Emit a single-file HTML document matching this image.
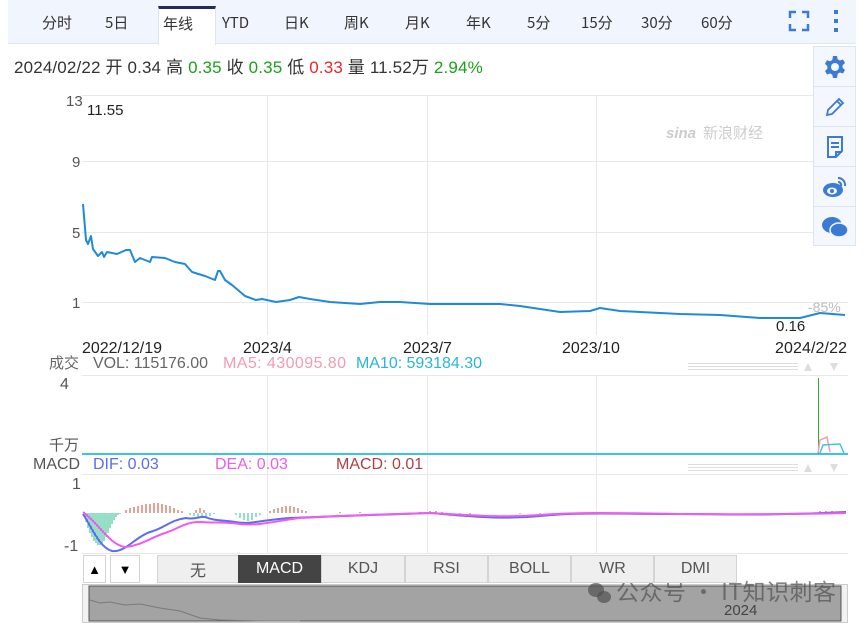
<!DOCTYPE html>
<html><head><meta charset="utf-8">
<style>
*{margin:0;padding:0;box-sizing:border-box}
body{width:865px;height:625px;background:#fff;position:relative;overflow:hidden;font-family:"Liberation Sans","Noto Sans CJK SC",sans-serif;color:#333}
.abs{position:absolute}
.tabbar{left:8px;top:0;width:848px;height:44px;background:#f1f5fd;border-bottom:1px solid #dde5f3}
.tab{position:absolute;top:12px;font-size:15px;color:#333;font-family:"Noto Sans CJK SC","Liberation Sans",sans-serif}
.active{position:absolute;left:150px;top:6px;width:58px;height:39px;background:#fff;border:1px solid #dde5f3;border-bottom:none;border-top:3px solid #1f2f5a}
.side{left:813px;top:46px;width:43px;height:200px;background:#f4f7fd;border:1px solid #dde5f3}
.side div{height:40px;border-bottom:1px solid #dde5f3;display:flex;align-items:center;justify-content:center}
.btn{position:absolute;top:555px;height:28px;background:#efefef;border:1px solid #d4d4d4;font-size:16px;color:#555;display:flex;align-items:center;justify-content:center;font-family:"Liberation Sans","Noto Sans CJK SC",sans-serif}
</style></head><body>
<div class="abs tabbar">
 <div class="active"></div>
 <span class="tab" style="left:34px">分时</span>
 <span class="tab" style="left:97px">5日</span>
 <span class="tab" style="left:155px;top:13px">年线</span>
 <span class="tab" style="left:214px">YTD</span>
 <span class="tab" style="left:276px">日K</span>
 <span class="tab" style="left:336px">周K</span>
 <span class="tab" style="left:397px">月K</span>
 <span class="tab" style="left:458px">年K</span>
 <span class="tab" style="left:519px">5分</span>
 <span class="tab" style="left:573px">15分</span>
 <span class="tab" style="left:633px">30分</span>
 <span class="tab" style="left:693px">60分</span>
 <svg class="abs" style="left:780px;top:10px" width="22" height="22" viewBox="0 0 22 22" fill="none" stroke="#3b7bd4" stroke-width="2.5"><path d="M2 8V2H8M14 2H20V8M20 14V20H14M8 20H2V14"/></svg>
 <svg class="abs" style="left:825px;top:10px" width="6" height="22"><rect x="1" y="0" width="4" height="4" fill="#3b7bd4"/><rect x="1" y="9" width="4" height="4" fill="#3b7bd4"/><rect x="1" y="18" width="4" height="4" fill="#3b7bd4"/></svg>
</div>
<div class="abs" style="left:14px;top:53px;font-size:17px;letter-spacing:0.15px;font-family:'Liberation Sans','Noto Sans CJK SC',sans-serif;white-space:nowrap">2024/02/22 开 0.34 高 <span style="color:#1aa11a">0.35</span> 收 <span style="color:#1aa11a">0.35</span> 低 <span style="color:#e8262b">0.33</span> 量 11.52万 <span style="color:#1aa11a">2.94%</span></div>

<svg class="abs" style="left:0;top:0" width="865" height="625">
 <g stroke="#e8e8e8" stroke-width="1">
  <line x1="82" y1="95.5" x2="848" y2="95.5"/><line x1="82" y1="161.5" x2="848" y2="161.5"/><line x1="82" y1="232.5" x2="848" y2="232.5"/><line x1="82" y1="302.5" x2="848" y2="302.5"/>
  <line x1="82" y1="375.5" x2="848" y2="375.5"/><line x1="82" y1="474.5" x2="848" y2="474.5"/><line x1="82" y1="553.5" x2="848" y2="553.5"/>
  <line x1="267.5" y1="95" x2="267.5" y2="335"/><line x1="427.5" y1="95" x2="427.5" y2="335"/><line x1="596.5" y1="95" x2="596.5" y2="335"/>
  <line x1="267.5" y1="375" x2="267.5" y2="553"/><line x1="427.5" y1="375" x2="427.5" y2="553"/><line x1="596.5" y1="375" x2="596.5" y2="553"/>
 </g>
 <polyline fill="none" stroke="#1f8bd8" stroke-width="2" stroke-linejoin="round" points="83,204 86,240 88,244 91,236 93,249 98,256 102,252 104,257 107,252 117,254 126,250 130,250 135,262 140,258 150,262 152,257 165,258 175,262 185,264 192,272 205,276 215,280 218,271 220,271 225,280 232,285 245,296 256,300 262,299 276,302 290,300 299,297 310,299 330,302 360,304 380,302 400,302 430,304 460,304 500,304 520,306 560,312 590,311 600,308 620,311 680,314 720,315 760,318 800,318 812,315 820,313 845,315"/>
 <text x="66" y="106" font-size="15" fill="#555">13</text>
 <text x="87" y="115" font-size="15" fill="#222">11.55</text>
 <text x="72" y="167" font-size="15" fill="#555">9</text>
 <text x="72" y="238" font-size="15" fill="#555">5</text>
 <text x="72" y="308" font-size="15" fill="#555">1</text>
 <text x="776" y="331" font-size="15" fill="#222">0.16</text>
 <text x="808" y="312" font-size="14" fill="#bbb">-85%</text>
 <text x="666" y="138" font-size="15" fill="#ccc" font-style="italic" font-weight="bold">sina</text>
 <text x="703" y="138" font-size="15" fill="#ccc" font-family="Noto Sans CJK SC">新浪财经</text>
 <g font-size="16" fill="#222">
  <text x="82" y="353" textLength="80">2022/12/19</text><text x="243" y="353">2023/4</text><text x="403" y="353">2023/7</text><text x="562" y="353">2023/10</text><text x="775" y="353" textLength="72">2024/2/22</text>
 </g>
 <g font-size="16" font-family="Liberation Sans,Noto Sans CJK SC">
  <text x="49" y="368" fill="#666" font-size="15">成交</text><text x="93" y="368" fill="#666" textLength="115">VOL: 115176.00</text>
  <text x="223" y="368" fill="#f59bb1" textLength="123">MA5: 430095.80</text><text x="356" y="368" fill="#28b6d8" textLength="126">MA10: 593184.30</text>
  <text x="60" y="389" fill="#555">4</text><text x="49" y="450" fill="#555" font-size="15">千万</text>
  <text x="33" y="469" fill="#555">MACD</text><text x="93" y="469" fill="#5b6cf0">DIF: 0.03</text>
  <text x="215" y="469" fill="#ef5af0">DEA: 0.03</text><text x="336" y="469" fill="#b04040">MACD: 0.01</text>
  <text x="72" y="489" fill="#555">1</text><text x="64" y="551" fill="#555">-1</text>
 </g>
 <g fill="#ddd"><rect x="688" y="363" width="110" height="1"/><rect x="688" y="366" width="110" height="1"/><rect x="688" y="369" width="110" height="1"/>
 <rect x="688" y="464" width="110" height="1"/><rect x="688" y="467" width="110" height="1"/><rect x="688" y="470" width="110" height="1"/>
 <path d="M804 371l4-8 4 8zM830 363l4 8 4-8zM804 472l4-8 4 8zM830 464l4 8 4-8z"/></g>
 <line x1="82" y1="454" x2="848" y2="454" stroke="#3cc4e4" stroke-width="2"/>
 <line x1="818.5" y1="378" x2="818.5" y2="454" stroke="#2cb02c"/>
 <path d="M818 453 L820 440 L827 437 L830 452" fill="none" stroke="#f59bb1" stroke-width="1.5"/>
 <path d="M820 453 L823 445 L840 444 L844 453" fill="none" stroke="#3cc4e4" stroke-width="1.5"/>
 <g stroke="#2dbf8a" stroke-width="1">
  <path d="M84 513V516M86 513V522M88 513V528M90 513V533M92 513V537M94 513V541M96 513V543M98 513V545M100 513V545M102 513V544M104 513V541M106 513V537M108 513V533M110 513V528M112 513V524M114 513V520M116 513V517M118 513V515M120 513V514"/>
  <path d="M190 513V515M194 513V516M198 513V517M202 513V517M206 513V518M210 513V516M214 513V514M236 513V515M240 513V518M244 513V520M248 513V521M252 513V520M256 513V517M260 513V515M430 513V514M440 513V515M450 513V516M460 513V516M470 513V515M520 513V514M540 513V514M580 513V514M640 513V514M660 513V514"/>
 </g>
 <g stroke="#c8472f" stroke-width="1">
  <path d="M126 513V510M130 513V508M134 513V507M138 513V506M142 513V505M146 513V504M150 513V504M154 513V503M158 513V503M162 513V504M166 513V505M170 513V506M174 513V508M178 513V510M182 513V511M196 513V510M200 513V508M204 513V510M270 513V511M274 513V509M278 513V508M282 513V507M286 513V506M290 513V506M294 513V507M298 513V508M302 513V510M306 513V511M340 513V512M360 513V512M420 513V512M430 513V511M436 513V511M442 513V512M820 513V511M826 513V511M832 513V511"/>
 </g>
 <path d="M83 514 C92 528,100 548,112 551 C125 553,135 537,150 532 C165 528,170 520,186 518 C195 520,200 516,205 517 C215 521,222 520,235 522 C250 525,260 520,290 518 C340 516,400 514,430 513 C470 516,500 520,540 516 C580 512,620 514,680 514 C720 514,770 516,846 512" fill="none" stroke="#5b6cf0" stroke-width="2"/>
 <path d="M83 512 C100 525,110 545,125 547 C140 546,150 538,165 533 C180 528,185 522,200 522 C215 523,225 522,240 524 C260 526,275 521,300 518 C350 515,400 514,430 513 C470 515,500 518,540 515 C580 512,620 513,680 514 C720 514,770 515,846 513" fill="none" stroke="#ef5af0" stroke-width="2"/>
 <rect x="82.5" y="584.5" width="765" height="38" fill="#f2f2f2" stroke="#ccc"/>
 <rect x="89" y="586" width="752" height="35" fill="#a3a3a3" stroke="#555"/>
 <polyline fill="none" stroke="#7a7a7a" stroke-width="1" points="90,600 100,603 110,602 125,605 140,604 160,608 180,611 200,618 220,620 260,621 300,621"/>
 <text x="724" y="615" font-size="15" fill="#444">2024</text>
 <g fill="rgba(80,80,80,0.7)"><ellipse cx="596" cy="590" rx="8" ry="7"/><ellipse cx="604" cy="597" rx="7" ry="6"/></g>
 <text x="616" y="600" font-size="23" fill="rgba(80,80,80,0.7)" font-family="Noto Sans CJK SC" textLength="220">公众号 · IT知识刺客</text>
</svg>
<div class="abs side">
 <div><svg width="24" height="24" viewBox="0 0 24 24"><path fill="#3b7bd4" d="M10 1h4l.7 3.2 2.2 1.3 3.1-1 2 3.5-2.4 2.2v2.6l2.4 2.2-2 3.5-3.1-1-2.2 1.3L14 23h-4l-.7-3.2-2.2-1.3-3.1 1-2-3.5 2.4-2.2v-2.6L2 8.8l2-3.5 3.1 1 2.2-1.3z"/><circle cx="12" cy="12" r="4" fill="#f4f7fd"/></svg></div>
 <div><svg width="24" height="24" viewBox="0 0 24 24" fill="none" stroke="#3b7bd4" stroke-width="1.8"><path d="M4 20l1-5L16 4l4 4L9 19z M14 6l4 4"/></svg></div>
 <div><svg width="20" height="24" viewBox="0 0 20 24" fill="none" stroke="#3b7bd4" stroke-width="2"><path d="M3 2h14v14l-6 6H3z M6 8h8M6 12h8M11 22v-5h6"/></svg></div>
 <div><svg width="26" height="24" viewBox="0 0 26 24"><ellipse cx="11" cy="15" rx="10" ry="7" fill="#3b7bd4"/><ellipse cx="10" cy="16" rx="5" ry="3.5" fill="#f4f7fd"/><circle cx="10" cy="16" r="2" fill="#3b7bd4"/><path d="M16 3a7 7 0 0 1 7 8M16 7a3 3 0 0 1 3 4" fill="none" stroke="#3b7bd4" stroke-width="2"/></svg></div>
 <div style="border:none"><svg width="28" height="24" viewBox="0 0 28 24"><ellipse cx="11" cy="10" rx="10" ry="8" fill="#3b7bd4"/><ellipse cx="18" cy="15" rx="9" ry="7" fill="#3b7bd4" stroke="#f4f7fd" stroke-width="1.5"/></svg></div>
</div>
<div class="btn" style="left:83px;width:23px;background:#fff;font-size:13px;color:#000">▲</div>
<div class="btn" style="left:110px;width:30px;background:#fff;font-size:13px;color:#000">▼</div>
<div class="btn" style="left:157px;width:82px">无</div>
<div class="btn" style="left:238px;width:83px;background:#444;color:#fff;border-color:#444">MACD</div>
<div class="btn" style="left:321px;width:84px">KDJ</div>
<div class="btn" style="left:405px;width:83px">RSI</div>
<div class="btn" style="left:488px;width:83px">BOLL</div>
<div class="btn" style="left:571px;width:83px">WR</div>
<div class="btn" style="left:654px;width:83px">DMI</div>
</body></html>
